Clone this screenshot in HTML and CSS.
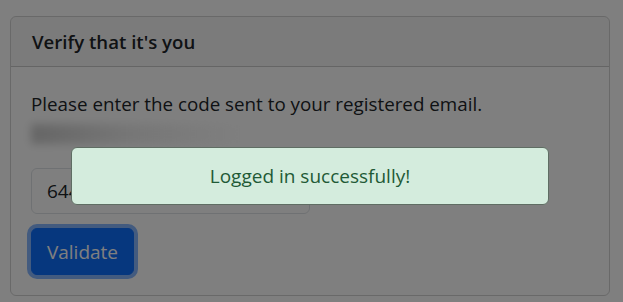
FILE: index.html
```html
<!DOCTYPE html>
<html>
<head>
<meta charset="utf-8">
<link rel="stylesheet" href="styles.css">
</head>
<body>
<div class="page">
  <div class="card">
    <div class="card-header">Verify that it's you</div>
    <div class="card-body">
      <p class="lead">Please enter the code sent to your registered email.</p>
      <div class="masked"><span class="blur"></span></div>
      <input class="code" type="text" value="644821">
      <button class="btn">Validate</button>
    </div>
  </div>
</div>
<div class="backdrop"></div>
<div class="toast">Logged in successfully!</div>
</body>
</html>
```
FILE: styles.css
```css
html, body {
  margin: 0;
  padding: 0;
  background: #ffffff;
  width: 623px;
  height: 302px;
  overflow: hidden;
  font-family: "Open Sans", "Noto Sans", sans-serif;
  color: #212529;
}
.page {
  padding: 16px 13px 0 10px;
}
.card {
  border: 1px solid rgba(0,0,0,.175);
  border-radius: 6px;
  height: 280px;
  box-sizing: border-box;
  overflow: hidden;
}
.card-header {
  height: 50px;
  box-sizing: border-box;
  padding: 0 21px;
  display: flex;
  align-items: center;
  font-weight: 600;
  font-size: 18.6px;
  background: rgba(0,0,0,.03);
  border-bottom: 1px solid rgba(0,0,0,.175);
}
.card-body {
  padding: 23px 20px 0 20px;
}
.lead {
  margin: 0;
  font-size: 18.8px;
  line-height: 28px;
}
.masked {
  height: 24px;
  margin-top: 6px;
  width: 230px;
}
.blur {
  display: block;
  height: 20px;
  width: 216px;
  background: linear-gradient(90deg, rgba(0,0,0,.2), rgba(0,0,0,.07) 45%, rgba(255,255,255,.3));
  filter: blur(4px);
}
.code {
  display: block;
  margin-top: 20px;
  width: 279px;
  height: 46px;
  box-sizing: border-box;
  border: 1px solid #dee2e6;
  border-radius: 6px;
  padding: 0 15px;
  font-family: inherit;
  font-size: 19px;
  color: #212529;
  background: #fff;
}
.btn {
  display: block;
  margin-top: 14px;
  width: 103px;
  height: 47px;
  border: 1px solid #0d6efd;
  border-radius: 6px;
  background: #0d6efd;
  color: #fff;
  font-family: inherit;
  font-size: 19px;
  box-shadow: 0 0 0 4px rgba(13,110,253,.5);
}
.backdrop {
  position: fixed;
  inset: 0;
  background: rgba(0,0,0,.5);
}
.toast {
  position: fixed;
  left: 71px;
  top: 147px;
  width: 478px;
  height: 58px;
  box-sizing: border-box;
  border: 1px solid #5f6d63;
  border-radius: 6px;
  background: #d4ecdd;
  color: #1f5a36;
  font-size: 19px;
  display: flex;
  align-items: center;
  justify-content: center;
}
```
